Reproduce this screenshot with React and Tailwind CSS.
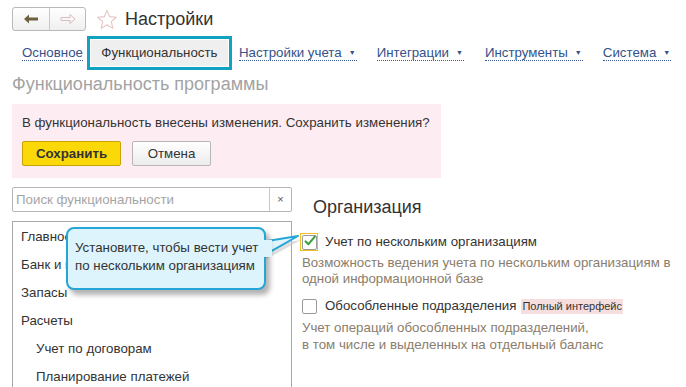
import React from "react"

const FONT = { fontFamily: '"Liberation Sans", Arial, sans-serif' }

const menus = [
  { label: "Настройки учета", ml: "ml-[7px]" },
  { label: "Интеграции", ml: "ml-[20px]" },
  { label: "Инструменты", ml: "ml-[21px]" },
  { label: "Система", ml: "ml-[20px]" },
]

const sections = [
  { label: "Главное" },
  { label: "Банк и касса" },
  { label: "Запасы" },
  { label: "Расчеты" },
  { label: "Учет по договорам", sub: true },
  { label: "Планирование платежей", sub: true },
]

function NavButtons() {
  return (
    <div className="flex h-[24px] w-[74px] rounded-[3px] border border-[#b9b9b9] bg-gradient-to-b from-white to-[#efefef] overflow-hidden">
      <div className="flex w-[37px] items-center justify-center border-r border-[#c8c8c8]">
        <svg width="16" height="10" viewBox="0 0 16 10">
          <path d="M1 5 L6 0.5 L6 3.5 L15 3.5 L15 6.5 L6 6.5 L6 9.5 Z" fill="#6e6140" />
        </svg>
      </div>
      <div className="flex flex-1 items-center justify-center">
        <svg width="16" height="10" viewBox="0 0 16 10">
          <path d="M15 5 L10 0.5 L10 3.5 L1 3.5 L1 6.5 L10 6.5 L10 9.5 Z" fill="none" stroke="#dcbcbc" strokeWidth="1" />
        </svg>
      </div>
    </div>
  )
}

function Star() {
  return (
    <svg width="22" height="21" viewBox="0 0 24 23" className="ml-[10px]">
      <path
        d="M12 1.5 L14.9 8.4 L22.3 9 L16.7 13.9 L18.4 21.2 L12 17.3 L5.6 21.2 L7.3 13.9 L1.7 9 L9.1 8.4 Z"
        fill="none"
        stroke="#e6c4c4"
        strokeWidth="1.2"
        strokeLinejoin="round"
      />
    </svg>
  )
}

function MenuLink({ label, ml }) {
  return (
    <span className={`${ml} flex items-center border-b border-dotted border-[#3a5a94] pr-[1px] leading-[15px] text-[#34518a] whitespace-nowrap`}>
      {label}
      <span className="ml-[7px] text-[7px] leading-[15px]">▼</span>
    </span>
  )
}

function Checkbox({ checked }) {
  return (
    <div className="flex h-[15px] w-[15px] items-center justify-center rounded-[2px] border border-[#9a9a9a] bg-white">
      {checked && (
        <svg width="15" height="14" viewBox="0 0 15 14" className="-mt-[2px] ml-[1px]">
          <path d="M2 7.5 L5.6 11 L13.5 1.5" fill="none" stroke="#3aa03a" strokeWidth="2.6" strokeLinecap="round" strokeLinejoin="round" />
        </svg>
      )}
    </div>
  )
}

function Callout() {
  return (
    <div className="absolute left-[66px] top-[227px] w-[235px] h-[66px]">
      <svg width="40" height="30" viewBox="0 0 40 30" className="absolute left-[195px] top-[6px]">
        <path d="M0 8 L38 3 L0 24 Z" fill="#c8c8c8" opacity="0.6" transform="translate(2 4)" />
        <path d="M0 9 L37 3 L0 24" fill="#dff5fd" stroke="#26a6d6" strokeWidth="2" strokeLinejoin="round" />
      </svg>
      <div className="absolute left-0 top-0 h-[63px] w-[200px] rounded-[8px] border-2 border-[#26a6d6] bg-[#ddf4fc] shadow-[4px_5px_5px_rgba(0,0,0,0.3)] pl-[7px] pt-[10px] text-[13.3px] leading-[18px] text-[#333] whitespace-nowrap">
        <p>Установите, чтобы вести учет</p>
        <p>по нескольким организациям</p>
      </div>
      <svg width="12" height="20" viewBox="0 0 12 20" className="absolute left-[196px] top-[13px]">
        <rect x="0" y="0" width="10" height="17" fill="#ddf4fc" />
      </svg>
    </div>
  )
}

export default function App() {
  return (
    <div className="relative h-[387px] w-[686px] overflow-hidden bg-white text-[13.3px] text-[#333]" style={FONT}>
      {/* Header */}
      <div className="flex items-center pl-[12px] pt-[7px]">
        <NavButtons />
        <Star />
        <h1 className="ml-[7px] text-[18px] leading-[24px] text-[#333]">Настройки</h1>
      </div>

      {/* Tabs */}
      <div className="mt-[5px] flex h-[34px] items-center pl-[22px]">
        <span className="border-b border-dotted border-[#3a5a94] leading-[15px] text-[#34518a]">Основное</span>
        <div className="ml-[4px] flex h-[34px] w-[145px] items-center justify-center border-[3px] border-[#12a0c3]">
          <div className="flex h-[26px] w-[137px] items-center justify-center rounded-[2px] bg-[#efefef] text-[#333]">
            Функциональность
          </div>
        </div>
        {menus.map(m => <MenuLink key={m.label} {...m} />)}
      </div>

      {/* Page heading */}
      <h2 className="mt-[3px] pl-[12px] text-[18px] leading-[22px] text-[#a3a3a3]">Функциональность программы</h2>

      {/* Pending changes */}
      <div className="ml-[12px] mt-[9px] h-[74px] w-[429px] bg-[#fdedf2] px-[10px] pt-[11px]">
        <p className="leading-[16px]">В функциональность внесены изменения. Сохранить изменения?</p>
        <div className="mt-[10px] flex gap-[11px]">
          <button className="h-[25px] w-[99px] rounded-[2px] border border-[#c9a300] bg-[#fbd909] font-bold text-[#333]">Сохранить</button>
          <button className="h-[25px] w-[79px] rounded-[2px] border border-[#b6b6b6] bg-gradient-to-b from-white to-[#ececec] text-[#333]">Отмена</button>
        </div>
      </div>

      {/* Body */}
      <div className="mt-[9px] flex">
        <div className="ml-[12px] w-[280px]">
          <div className="flex h-[25px] rounded-[2px] border border-[#b5b5b5]">
            <span className="flex-1 pl-[3px] leading-[23px] text-[#a5a5a5]">Поиск функциональности</span>
            <span className="flex w-[22px] items-center justify-center border-l border-[#c8c8c8] text-[11px] text-[#555]">×</span>
          </div>
          <div className="mt-[9px] h-[200px] border border-[#a8a8a8] pt-[1px]">
            {sections.map(s => (
              <div key={s.label} className={`flex h-[28px] items-center ${s.sub ? "pl-[23px]" : "pl-[8px]"}`}>
                {s.label}
              </div>
            ))}
          </div>
        </div>

        <div className="ml-[8px] flex-1">
          <h3 className="mt-[8px] pl-[13px] text-[18px] leading-[24px] text-[#333]">Организация</h3>

          <div className="mt-[14px] flex h-[18px] items-center">
            <div className="flex h-[18px] w-[18px] items-center justify-center border border-[#f0c020]">
              <Checkbox checked />
            </div>
            <span className="ml-[7px]">Учет по нескольким организациям</span>
          </div>
          <p className="mt-[4px] pl-[2px] leading-[16px] text-[#8a7d6c]">
            Возможность ведения учета по нескольким организациям в<br />одной информационной базе
          </p>

          <div className="mt-[10px] flex h-[18px] items-center pl-[2px]">
            <Checkbox />
            <span className="ml-[8px]">Обособленные подразделения</span>
            <span className="ml-[5px] bg-[#f6dede] px-[1px] text-[11px] leading-[15px] text-[#333]">Полный интерфейс</span>
          </div>
          <p className="mt-[4px] pl-[2px] leading-[17px] text-[#8a7d6c]">
            Учет операций обособленных подразделений,<br />в том числе и выделенных на отдельный баланс
          </p>
        </div>
      </div>

      <Callout />
    </div>
  )
}
